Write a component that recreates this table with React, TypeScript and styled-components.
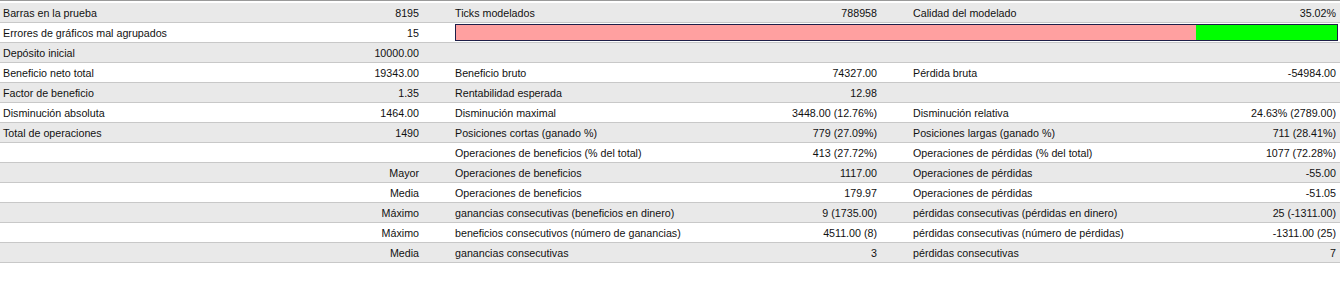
import React from 'react'
import styled, { createGlobalStyle } from 'styled-components'

const GlobalStyle = createGlobalStyle`
  html, body {
    margin: 0;
    padding: 0;
    background: #ffffff;
  }
  body {
    font-family: 'Liberation Sans', Arial, sans-serif;
    font-size: 10.7px;
    color: #111;
  }
`

const Report = styled.div`
  width: 1340px;
  border-top: 1px solid #9a9a9a;
  padding-top: 2px;
  background: #ffffff;
`

const Row = styled.div<{ $shade: boolean }>`
  display: grid;
  grid-template-columns: 452px 458px 1fr;
  height: 19px;
  border-bottom: 1px solid #c8c8c8;
  background: ${(p) => (p.$shade ? '#e9e9e9' : '#ffffff')};
`

const Group = styled.div<{ $last?: boolean }>`
  display: flex;
  align-items: center;
  justify-content: space-between;
  padding: 0 ${(p) => (p.$last ? '4px' : '33px')} 0 3px;
  white-space: nowrap;
`

const Label = styled.span``

const Value = styled.span`
  text-align: right;
  margin-left: auto;
`

const BarCell = styled.div`
  grid-column: 2 / 4;
  display: flex;
  align-items: center;
  padding: 0 2px 0 3px;
`

const QualityBar = styled.div`
  flex: 1;
  height: 15px;
  display: flex;
  border: 1px solid #1e1e48;
  background: #ffa0a0;
`

const QualityFill = styled.div`
  margin-left: auto;
  height: 100%;
  background: #00ff00;
`

type Pair = [string, string]

interface RowData {
  groups: Pair[]
  bar?: number
}

const rows: RowData[] = [
  {
    groups: [
      ['Barras en la prueba', '8195'],
      ['Ticks modelados', '788958'],
      ['Calidad del modelado', '35.02%'],
    ],
  },
  { groups: [['Errores de gráficos mal agrupados', '15']], bar: 141 },
  { groups: [['Depósito inicial', '10000.00'], ['', ''], ['', '']] },
  {
    groups: [
      ['Beneficio neto total', '19343.00'],
      ['Beneficio bruto', '74327.00'],
      ['Pérdida bruta', '-54984.00'],
    ],
  },
  {
    groups: [
      ['Factor de beneficio', '1.35'],
      ['Rentabilidad esperada', '12.98'],
      ['', ''],
    ],
  },
  {
    groups: [
      ['Disminución absoluta', '1464.00'],
      ['Disminución maximal', '3448.00 (12.76%)'],
      ['Disminución relativa', '24.63% (2789.00)'],
    ],
  },
  {
    groups: [
      ['Total de operaciones', '1490'],
      ['Posiciones cortas (ganado %)', '779 (27.09%)'],
      ['Posiciones largas (ganado %)', '711 (28.41%)'],
    ],
  },
  {
    groups: [
      ['', ''],
      ['Operaciones de beneficios (% del total)', '413 (27.72%)'],
      ['Operaciones de pérdidas (% del total)', '1077 (72.28%)'],
    ],
  },
  {
    groups: [
      ['', 'Mayor'],
      ['Operaciones de beneficios', '1117.00'],
      ['Operaciones de pérdidas', '-55.00'],
    ],
  },
  {
    groups: [
      ['', 'Media'],
      ['Operaciones de beneficios', '179.97'],
      ['Operaciones de pérdidas', '-51.05'],
    ],
  },
  {
    groups: [
      ['', 'Máximo'],
      ['ganancias consecutivas (beneficios en dinero)', '9 (1735.00)'],
      ['pérdidas consecutivas (pérdidas en dinero)', '25 (-1311.00)'],
    ],
  },
  {
    groups: [
      ['', 'Máximo'],
      ['beneficios consecutivos (número de ganancias)', '4511.00 (8)'],
      ['pérdidas consecutivas (número de pérdidas)', '-1311.00 (25)'],
    ],
  },
  {
    groups: [
      ['', 'Media'],
      ['ganancias consecutivas', '3'],
      ['pérdidas consecutivas', '7'],
    ],
  },
]

const App: React.FC = () => {
  return (
    <>
      <GlobalStyle />
      <Report>
        {rows.map((row, i) => (
          <Row key={i} $shade={i % 2 === 0}>
            {row.groups.map(([label, value], j) => (
              <Group key={j} $last={j === 2}>
                <Label>{label}</Label>
                <Value>{value}</Value>
              </Group>
            ))}
            {row.bar !== undefined && (
              <BarCell>
                <QualityBar>
                  <QualityFill style={{ width: row.bar }} />
                </QualityBar>
              </BarCell>
            )}
          </Row>
        ))}
      </Report>
    </>
  )
}

export default App
